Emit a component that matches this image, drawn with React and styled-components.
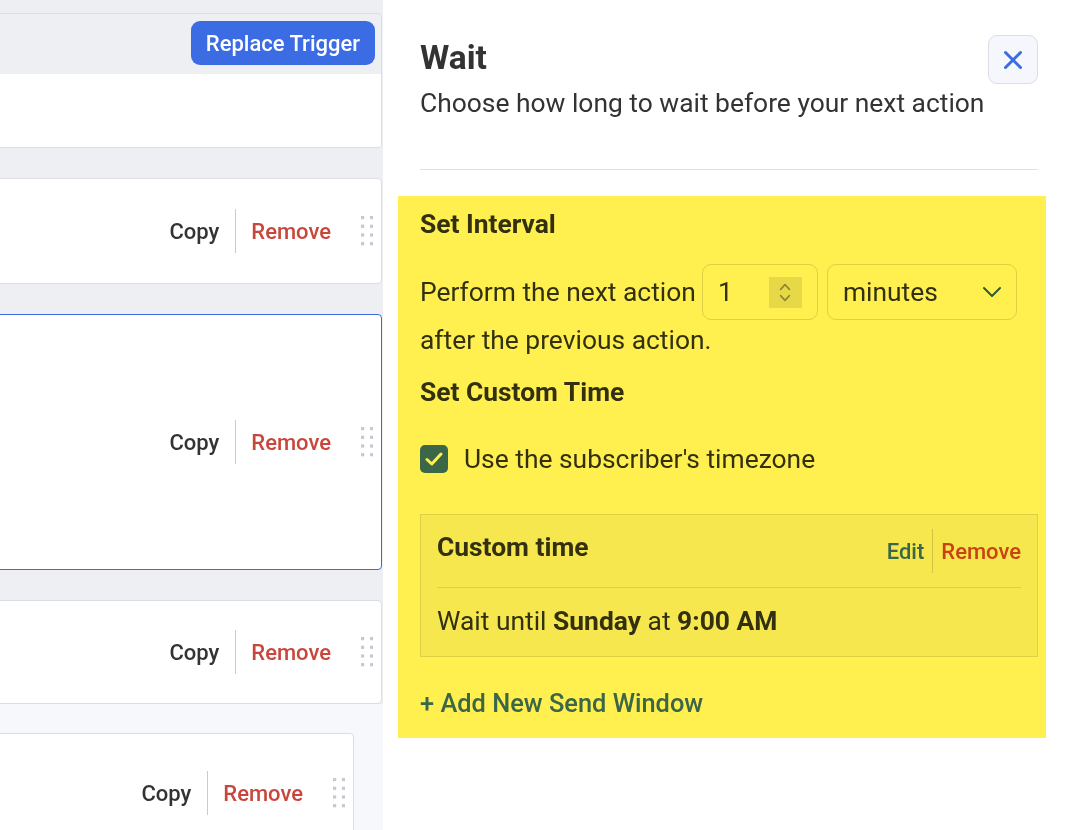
import React from 'react';
import styled, { createGlobalStyle } from 'styled-components';

const GlobalStyle = createGlobalStyle`
  * { box-sizing: border-box; }
  html, body { margin: 0; padding: 0; }
  body {
    font-family: Roboto, 'Noto Sans', sans-serif;
    color: #333;
    background: #fff;
  }
`;

const Page = styled.div`
  display: flex;
  height: 830px;
  overflow: hidden;
`;

/* ---------- left: workflow canvas ---------- */

const Canvas = styled.div`
  width: 383px;
  flex-shrink: 0;
  background: #eeeff3;
  overflow: hidden;
  padding: 13px 1px 0 0;
  display: flex;
  flex-direction: column;
`;

const Steps = styled.div`
  margin-left: -24px;
  display: flex;
  flex-direction: column;
  gap: 30px;
  flex: 1;
`;

const TriggerCard = styled.div`
  border: 1px solid #dcdde4;
  border-radius: 4px;
  overflow: hidden;
`;

const TriggerHeader = styled.div`
  height: 60px;
  background: #eeeff3;
  display: flex;
  align-items: flex-start;
  justify-content: flex-end;
  padding: 7px 6px 0 0;
`;

const TriggerBody = styled.div`
  height: 73px;
  background: #fff;
`;

const PrimaryButton = styled.button`
  height: 44px;
  padding: 0 15px;
  border: none;
  border-radius: 9px;
  background: #3b6ce3;
  color: #fff;
  font-family: inherit;
  font-size: 22px;
  font-weight: 500;
  cursor: pointer;
`;

const StepCard = styled.div`
  height: ${p => p.$height}px;
  flex-shrink: 0;
  background: #fff;
  border: 1px solid ${p => (p.$active ? '#3b6ce3' : '#dcdde4')};
  border-radius: 4px;
  display: flex;
  align-items: center;
  justify-content: flex-end;
  padding-right: 8px;
`;

const ActionLink = styled.span`
  font-size: 22px;
  font-weight: 500;
  color: ${p => (p.$danger ? '#c9463d' : '#333')};
  cursor: pointer;
`;

const ActionDivider = styled.span`
  width: 1px;
  height: 44px;
  background: #c8cad8;
  margin: 0 15px 0 16px;
`;

const Grip = styled.svg`
  margin-left: 30px;
  flex-shrink: 0;
`;

const SubBranch = styled.div`
  flex: 1;
  margin-right: -1px;
  background: #f7f8fb;
  padding: 29px 29px 0 0;
`;

const DragHandle = () => (
  <Grip width="12" height="30" viewBox="0 0 12 30">
    {[0, 8.7, 17.4, 26.1].map(y =>
      [0, 9].map(x => <rect key={`${x}-${y}`} x={x} y={y} width="3.2" height="3.2" fill="#c6c8d4" />)
    )}
  </Grip>
);

const StepActions = () => (
  <>
    <ActionLink>Copy</ActionLink>
    <ActionDivider />
    <ActionLink $danger>Remove</ActionLink>
    <DragHandle />
  </>
);

/* ---------- right: wait settings panel ---------- */

const Panel = styled.aside`
  flex: 1;
  background: #fff;
  padding: 35px 28px 0 37px;
  display: flex;
  flex-direction: column;
`;

const PanelHeader = styled.header`
  display: flex;
  justify-content: space-between;
  align-items: flex-start;
`;

const Title = styled.h1`
  margin: 5px 0 0;
  font-size: 33.5px;
  line-height: 36px;
  font-weight: 700;
  color: #333;
`;

const Subtitle = styled.p`
  margin: 12px 0 0;
  font-size: 26.4px;
  line-height: 30px;
  color: #333;
`;

const CloseButton = styled.button`
  width: 50px;
  height: 49px;
  border: 1.5px solid #dcdde6;
  border-radius: 9px;
  background: #f5f7fd;
  display: grid;
  place-items: center;
  padding: 0;
  cursor: pointer;
`;

const Rule = styled.hr`
  margin: 51px 0 0;
  border: none;
  height: 1px;
  background: #e1e2e6;
`;

const Highlight = styled.section`
  position: relative;
  margin: 26px -8px 0 -22px;
  padding: 13px 8px 20px 22px;

  &::after {
    content: '';
    position: absolute;
    inset: 0;
    background: #fff04f;
    mix-blend-mode: multiply;
    pointer-events: none;
  }
`;

const SectionTitle = styled.h3`
  margin: ${p => p.$top || 0}px 0 0;
  font-size: 26.4px;
  line-height: 30px;
  font-weight: 700;
  color: #333;
`;

const BodyText = styled.span`
  font-size: 26.4px;
  line-height: 30px;
  color: #333;
`;

const IntervalRow = styled.div`
  margin-top: 25px;
  display: flex;
  flex-wrap: wrap;
  align-items: center;
  column-gap: 6px;
  row-gap: 5px;
`;

const Field = styled.div`
  height: 56px;
  width: ${p => p.$width}px;
  border: 1px solid #dedede;
  border-radius: 9px;
  background: #fff;
  display: flex;
  align-items: center;
  justify-content: space-between;
  padding: 0 ${p => p.$padRight || 14}px 0 15px;
  margin-left: ${p => p.$gap || 0}px;
  font-size: 26.4px;
  color: #333;
`;

const Spinner = styled.div`
  width: 33px;
  height: 31px;
  background: #e6e6e6;
  display: flex;
  flex-direction: column;
  align-items: center;
  justify-content: center;
  gap: 3px;
`;

const CheckRow = styled.label`
  margin-top: 37px;
  display: flex;
  align-items: center;
  gap: 16px;
  cursor: pointer;
`;

const CheckBox = styled.span`
  width: 28px;
  height: 28px;
  border-radius: 5px;
  background: #3b6ce3;
  display: grid;
  place-items: center;
`;

const WindowCard = styled.div`
  margin-top: 40px;
  border: 1px solid #dcdde3;
  background: #f5f6f7;
  padding: 14px 16px 20px;
`;

const WindowHeader = styled.div`
  display: flex;
  align-items: center;
  justify-content: space-between;
  height: 44px;
  padding-bottom: 14px;
  box-sizing: content-box;
  border-bottom: 1px solid #dcdde3;
`;

const WindowTitle = styled.h4`
  margin: 0;
  font-size: 26.4px;
  font-weight: 700;
  color: #333;
  align-self: flex-start;
  line-height: 36px;
`;

const WindowActions = styled.div`
  display: flex;
  align-items: center;
  height: 44px;
`;

const TextLink = styled.span`
  font-size: 22px;
  font-weight: 500;
  color: ${p => (p.$danger ? '#c9463d' : '#3b6ce3')};
  cursor: pointer;
`;

const SmallDivider = styled.span`
  width: 1px;
  height: 44px;
  background: #cfd1d8;
  margin: 0 8px;
`;

const WindowSummary = styled.p`
  margin: 18px 0 0;
  font-size: 26.4px;
  line-height: 30px;
  color: #333;

  b { font-weight: 700; }
`;

const AddLink = styled.a`
  display: block;
  margin-top: 31px;
  font-size: 25.4px;
  line-height: 30px;
  font-weight: 500;
  color: #3b6ce3;
  text-decoration: none;
  cursor: pointer;
`;

const Chevron = ({ up, width = 20, height = 11, color = '#9a9a9a', stroke = 2 }) => (
  <svg width={width} height={height} viewBox={`0 0 ${width} ${height}`} fill="none">
    <path
      d={up
        ? `M${stroke} ${height - stroke} L${width / 2} ${stroke} L${width - stroke} ${height - stroke}`
        : `M${stroke} ${stroke} L${width / 2} ${height - stroke} L${width - stroke} ${stroke}`}
      stroke={color}
      strokeWidth={stroke}
      strokeLinecap="round"
      strokeLinejoin="round"
    />
  </svg>
);

export default function App() {
  return (
    <Page>
      <GlobalStyle />
      <Canvas>
        <Steps>
          <TriggerCard>
            <TriggerHeader>
              <PrimaryButton>Replace Trigger</PrimaryButton>
            </TriggerHeader>
            <TriggerBody />
          </TriggerCard>
          <StepCard $height={106}><StepActions /></StepCard>
          <StepCard $height={256} $active><StepActions /></StepCard>
          <StepCard $height={104} style={{ marginBottom: -30 }}><StepActions /></StepCard>
          <SubBranch>
            <StepCard $height={120}><StepActions /></StepCard>
          </SubBranch>
        </Steps>
      </Canvas>

      <Panel>
        <PanelHeader>
          <div>
            <Title>Wait</Title>
            <Subtitle>Choose how long to wait before your next action</Subtitle>
          </div>
          <CloseButton aria-label="Close">
            <svg width="20" height="20" viewBox="0 0 20 20" fill="none">
              <path d="M2.5 2.5 L17.5 17.5 M17.5 2.5 L2.5 17.5" stroke="#3b6ce3" strokeWidth="3" strokeLinecap="round" />
            </svg>
          </CloseButton>
        </PanelHeader>
        <Rule />

        <Highlight>
          <SectionTitle>Set Interval</SectionTitle>
          <IntervalRow>
            <BodyText>Perform the next action</BodyText>
            <Field $width={116} $padRight={15}>
              1
              <Spinner>
                <Chevron up width={12} height={8} color="#8f8f8f" stroke={1.6} />
                <Chevron width={12} height={8} color="#8f8f8f" stroke={1.6} />
              </Spinner>
            </Field>
            <Field $width={190} $gap={3}>
              minutes
              <Chevron width={20} height={12} color="#2f5fa0" stroke={2} />
            </Field>
            <BodyText>after the previous action.</BodyText>
          </IntervalRow>

          <SectionTitle $top={22}>Set Custom Time</SectionTitle>
          <CheckRow>
            <CheckBox>
              <svg width="18" height="14" viewBox="0 0 18 14" fill="none">
                <path d="M2 7.5 L6.8 12 L16 2" stroke="#fff" strokeWidth="3" strokeLinecap="round" strokeLinejoin="round" />
              </svg>
            </CheckBox>
            <BodyText>Use the subscriber's timezone</BodyText>
          </CheckRow>

          <WindowCard>
            <WindowHeader>
              <WindowTitle>Custom time</WindowTitle>
              <WindowActions>
                <TextLink>Edit</TextLink>
                <SmallDivider />
                <TextLink $danger>Remove</TextLink>
              </WindowActions>
            </WindowHeader>
            <WindowSummary>
              Wait until <b>Sunday</b> at <b>9:00 AM</b>
            </WindowSummary>
          </WindowCard>

          <AddLink>+ Add New Send Window</AddLink>
        </Highlight>
      </Panel>
    </Page>
  );
}
